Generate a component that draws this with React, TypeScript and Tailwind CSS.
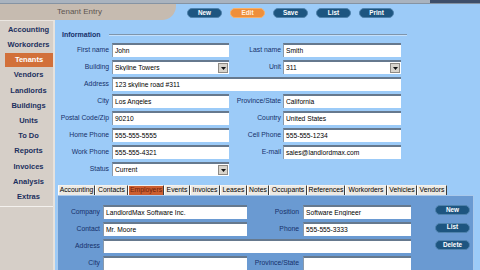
import React from "react";

const sideItems = ["Accounting", "Workorders", "Tenants", "Vendors", "Landlords", "Buildings", "Units", "To Do", "Reports", "Invoices", "Analysis", "Extras"];

const tabs = [
  { name: "Accounting", w: "w-[37px]" },
  { name: "Contacts", w: "w-[33px]" },
  { name: "Employers", w: "w-[36px]" },
  { name: "Events", w: "w-[26px]" },
  { name: "Invoices", w: "w-[30px]" },
  { name: "Leases", w: "w-[27px]" },
  { name: "Notes", w: "w-[22px]" },
  { name: "Occupants", w: "w-[38px]" },
  { name: "References", w: "w-[38px]" },
  { name: "Workorders", w: "w-[42px]" },
  { name: "Vehicles", w: "w-[30px]" },
  { name: "Vendors", w: "w-[30px]" },
];

const Box = ({ value = "", className = "", select = false }: { value?: string; className?: string; select?: boolean }) => (
  <div className={`flex h-[14px] flex-none items-center border-t-2 border-l border-t-[#66798e] border-l-[#8a9aab] bg-white ${className}`}>
    <span className="flex-1 truncate pl-[2px] text-[6.7px] leading-none text-black">{value}</span>
    {select && (
      <span className="mr-[1px] flex h-[10px] w-[10px] items-center justify-center border border-[#8e8a84] bg-[#d8d4cc]">
        <svg width="5" height="3" viewBox="0 0 5 3">
          <path d="M0 0h5L2.5 3z" fill="#111" />
        </svg>
      </span>
    )}
  </div>
);

const Label = ({ text, w }: { text: string; w: string }) => (
  <div className={`${w} flex flex-none justify-end`}>
    <span className="whitespace-nowrap text-[6.8px] leading-none text-[#16306a]">{text}</span>
  </div>
);

const Pill = ({ text, orange = false }: { text: string; orange?: boolean }) => (
  <button
    className={`flex h-[10px] w-[35px] items-center justify-center rounded-full border text-[6.4px] font-bold leading-none ${
      orange ? "border-[#f7b06a] bg-[#ef8f3a] text-[#fff1e0]" : "border-[#4f82ad] bg-[#1d5580] text-white"
    }`}
  >
    {text}
  </button>
);

export default function App() {
  return (
    <div className="flex h-[270px] w-[480px] flex-col overflow-hidden bg-[#9ccbf8] font-['Liberation_Sans',Arial,sans-serif]">
      {/* top strip */}
      <div className="flex h-[4px] border-b border-[#8593a3]">
        <div className="flex-1 bg-[#a9b3bf]" />
        <div className="w-[50px] bg-[#3d4e6a]" />
      </div>

      {/* header */}
      <div className="flex h-[17px]">
        <div className="flex w-[176px] items-center rounded-br-[14px] bg-[#c6bbb0] pl-[57px]">
          <span className="text-[8px] leading-none text-[#5e5650]">Tenant Entry</span>
        </div>
        <div className="ml-[11px] flex gap-[8px] pt-[4px]">
          <Pill text="New" />
          <Pill text="Edit" orange />
          <Pill text="Save" />
          <Pill text="List" />
          <Pill text="Print" />
        </div>
      </div>

      <div className="flex flex-1">
        {/* sidebar */}
        <aside className="flex w-[55px] flex-col border-r-2 border-t border-r-[#e6e2dd] border-t-[#ebe7e2] bg-[#d6cfc8] pl-[4px] pt-[1px]">
          {sideItems.map((item) =>
            item === "Tenants" ? (
              <div key={item} className="flex h-[15.2px] items-center">
                <div className="ml-[1px] flex h-[14px] w-[48px] items-center justify-center bg-[#d2703a] text-[7.5px] font-bold leading-none text-white">
                  {item}
                </div>
              </div>
            ) : (
              <div key={item} className="flex h-[15.2px] items-center justify-center text-[7.5px] font-bold leading-none text-[#1c2f5e]">
                {item}
              </div>
            )
          )}
          <div className="-ml-[4px] mt-[2px] border-t border-[#f4f1ee]" />
        </aside>

        {/* main */}
        <main className="flex flex-1 flex-col rounded-tl-[6px] bg-[#9ccbf8]">
          <div className="flex flex-col pl-[7px]">
            <div className="mt-[10px] flex h-[9px] items-center">
              <span className="text-[7px] font-bold leading-none text-[#16306a]">Information</span>
              <div className="ml-[8px] w-[298px] border-t border-b border-t-[#7f95ab] border-b-[#c5e0fb]" />
            </div>

            <div className="mt-[4px] flex flex-col gap-[3px]">
              <div className="flex items-center">
                <Label text="First name" w="w-[47px]" />
                <Box value="John" className="ml-[3px] w-[117px]" />
                <Label text="Last name" w="w-[52px]" />
                <Box value="Smith" className="ml-[2px] w-[118px]" />
              </div>
              <div className="flex items-center">
                <Label text="Building" w="w-[47px]" />
                <Box value="Skyline Towers" select className="ml-[3px] w-[117px]" />
                <Label text="Unit" w="w-[52px]" />
                <Box value="311" select className="ml-[2px] w-[118px]" />
              </div>
              <div className="flex items-center">
                <Label text="Address" w="w-[47px]" />
                <Box value="123 skyline road #311" className="ml-[3px] w-[289px]" />
              </div>
              <div className="flex items-center">
                <Label text="City" w="w-[47px]" />
                <Box value="Los Angeles" className="ml-[3px] w-[117px]" />
                <Label text="Province/State" w="w-[52px]" />
                <Box value="California" className="ml-[2px] w-[118px]" />
              </div>
              <div className="flex items-center">
                <Label text="Postal Code/Zip" w="w-[47px]" />
                <Box value="90210" className="ml-[3px] w-[117px]" />
                <Label text="Country" w="w-[52px]" />
                <Box value="United States" className="ml-[2px] w-[118px]" />
              </div>
              <div className="flex items-center">
                <Label text="Home Phone" w="w-[47px]" />
                <Box value="555-555-5555" className="ml-[3px] w-[117px]" />
                <Label text="Cell Phone" w="w-[52px]" />
                <Box value="555-555-1234" className="ml-[2px] w-[118px]" />
              </div>
              <div className="flex items-center">
                <Label text="Work Phone" w="w-[47px]" />
                <Box value="555-555-4321" className="ml-[3px] w-[117px]" />
                <Label text="E-mail" w="w-[52px]" />
                <Box value="sales@landlordmax.com" className="ml-[2px] w-[118px]" />
              </div>
              <div className="flex items-center">
                <Label text="Status" w="w-[47px]" />
                <Box value="Current" select className="ml-[3px] w-[117px]" />
              </div>
            </div>
          </div>

          {/* tabs */}
          <div className="ml-[3px] mt-[9px] flex h-[10px]">
            {tabs.map((t) => (
              <div
                key={t.name}
                className={`${t.w} flex items-center justify-center border-l border-r border-t border-l-[#ffffff] border-r-[#3c3c3c] border-t-[#f4f2ee] text-[6.8px] leading-none ${
                  t.name === "Employers" ? "bg-[#cc5e30] text-[#6e1f0a]" : "bg-[#ece9e3] text-black"
                }`}
              >
                {t.name}
              </div>
            ))}
          </div>

          {/* sub panel */}
          <div className="ml-[2px] flex w-[417px] flex-1 border-l border-r border-t border-[#a9c9ec] bg-[#6a9ad2] pt-[9px]">
            <div className="flex flex-col gap-[3px]">
              <div className="flex items-center">
                <Label text="Company" w="w-[42px]" />
                <Box value="LandlordMax Software Inc." className="ml-[3px] w-[144px]" />
                <Label text="Position" w="w-[52px]" />
                <Box value="Software Engineer" className="ml-[4px] w-[108px]" />
              </div>
              <div className="flex items-center">
                <Label text="Contact" w="w-[42px]" />
                <Box value="Mr. Moore" className="ml-[3px] w-[144px]" />
                <Label text="Phone" w="w-[52px]" />
                <Box value="555-555-3333" className="ml-[4px] w-[108px]" />
              </div>
              <div className="flex items-center">
                <Label text="Address" w="w-[42px]" />
                <Box className="ml-[3px] w-[308px]" />
              </div>
              <div className="flex items-center">
                <Label text="City" w="w-[42px]" />
                <Box className="ml-[3px] w-[144px]" />
                <Label text="Province/State" w="w-[52px]" />
                <Box className="ml-[4px] w-[108px]" />
              </div>
            </div>
            <div className="ml-[24px] flex flex-col gap-[7.5px]">
              <Pill text="New" />
              <Pill text="List" />
              <Pill text="Delete" />
            </div>
          </div>
        </main>
      </div>
    </div>
  );
}
